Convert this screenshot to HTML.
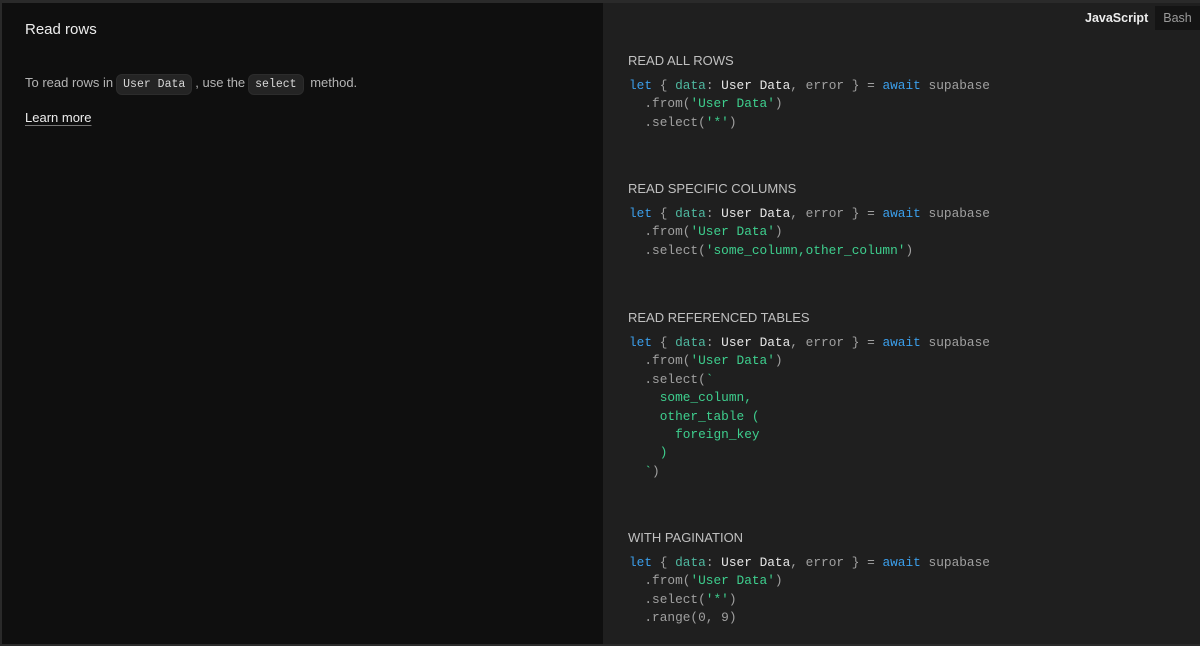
<!DOCTYPE html>
<html><head><style>
*{margin:0;padding:0;box-sizing:border-box}
body{width:1200px;height:646px;background:#2a2a2a;position:relative;overflow:hidden;font-family:"Liberation Sans",sans-serif}
#l{position:absolute;left:2px;top:3px;width:601px;height:641px;background:#0f0f0f}
#r{position:absolute;left:603px;top:3px;width:597px;height:641px;background:#1f1f1f}
.t{position:absolute;left:23px;top:18px;font-size:15px;color:#ededed}
.p{position:absolute;left:23px;top:71px;font-size:13px;color:#b4b4b4;white-space:nowrap}
.pill{display:inline-block;font-family:"Liberation Mono",monospace;font-size:11.5px;color:#d8d8d8;background:#242424;border:1px solid #2c2c2c;border-radius:6px;padding:3px 6px;margin:0 3px}
.lm{position:absolute;left:23px;top:107px;font-size:13px;color:#ededed;text-decoration:underline;text-decoration-color:#777;text-underline-offset:3px}
.js{position:absolute;left:482px;top:8px;font-size:12.5px;font-weight:bold;color:#ededed}
.bash{position:absolute;left:552px;top:3px;width:45px;height:24px;background:#141414;font-size:12.5px;color:#9a9a9a;text-align:center;line-height:24px}
.h{position:absolute;left:25px;font-size:13px;color:#c0c0c0}
pre{position:absolute;left:26px;font-family:"Liberation Mono",monospace;font-size:12.8px;line-height:18.4px;color:#a0a0a0}
.k{color:#3b9eea}.d{color:#4fb8a0}.w{color:#e6e6e6}.s{color:#3ecf8e}
</style></head><body>
<div id="l">
<div class="t">Read rows</div>
<div class="p">To read rows in<span class="pill">User Data</span>, use the<span class="pill">select</span> method.</div>
<div class="lm">Learn more</div>
</div>
<div id="r">
<div class="js">JavaScript</div><div class="bash">Bash</div>
<div class="h" style="top:50px">READ ALL ROWS</div>
<pre style="top:74px"><span class="k">let</span> { <span class="d">data</span>: <span class="w">User Data</span>, error } = <span class="k">await</span> supabase
  .from(<span class="s">'User Data'</span>)
  .select(<span class="s">'*'</span>)</pre>
<div class="h" style="top:178px">READ SPECIFIC COLUMNS</div>
<pre style="top:202px"><span class="k">let</span> { <span class="d">data</span>: <span class="w">User Data</span>, error } = <span class="k">await</span> supabase
  .from(<span class="s">'User Data'</span>)
  .select(<span class="s">'some_column,other_column'</span>)</pre>
<div class="h" style="top:307px">READ REFERENCED TABLES</div>
<pre style="top:331px"><span class="k">let</span> { <span class="d">data</span>: <span class="w">User Data</span>, error } = <span class="k">await</span> supabase
  .from(<span class="s">'User Data'</span>)
  .select(<span class="s">`
    some_column,
    other_table (
      foreign_key
    )
  `</span>)</pre>
<div class="h" style="top:527px">WITH PAGINATION</div>
<pre style="top:551px"><span class="k">let</span> { <span class="d">data</span>: <span class="w">User Data</span>, error } = <span class="k">await</span> supabase
  .from(<span class="s">'User Data'</span>)
  .select(<span class="s">'*'</span>)
  .range(0, 9)</pre>
</div>
</body></html>
